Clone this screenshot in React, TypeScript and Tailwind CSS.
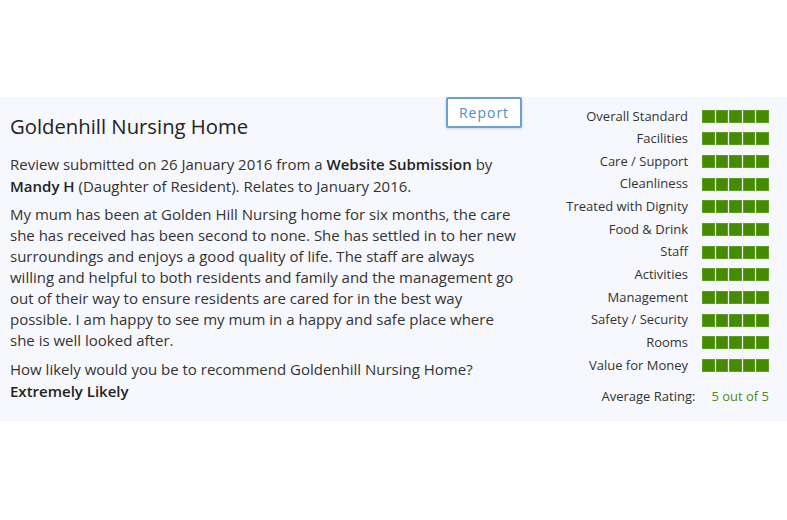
const ratings = [
  "Overall Standard",
  "Facilities",
  "Care / Support",
  "Cleanliness",
  "Treated with Dignity",
  "Food & Drink",
  "Staff",
  "Activities",
  "Management",
  "Safety / Security",
  "Rooms",
  "Value for Money",
];

const RatingBar = () => (
  <div className="flex gap-[1px]">
    {[0, 1, 2, 3, 4].map((i) => (
      <div key={i} className="w-[12.6px] h-[13px] bg-[#458b00] border border-[#5c9e24]" />
    ))}
  </div>
);

export default function App() {
  return (
    <div className="w-[787px] h-[520px] bg-white pt-[97px] font-['Open_Sans',sans-serif]">
      <div className="flex h-[324px] bg-[#f7f8fd]">
        <div className="w-[525px] pl-[10px] pr-[3px]">
          <div className="flex justify-between items-start">
            <h2 className="mt-[15px] text-[20.3px] leading-[28px] text-[#222]">Goldenhill Nursing Home</h2>
            <button className="w-[76px] h-[31px] bg-white border-2 border-[#6aa2d8] rounded-[2px] shadow-[0_1px_3px_rgba(0,0,0,0.15)] text-[14px] tracking-[1px] text-[#4f8cc9]">
              Report
            </button>
          </div>
          <div className="mt-[14px] text-[15px] leading-[21.5px] text-[#333]">
            <p className="mb-[7px]">
              Review submitted on 26 January 2016 from a <b className="font-semibold text-[#222]">Website Submission</b> by{" "}
              <b className="font-semibold text-[#222]">Mandy H</b> (Daughter of Resident). Relates to January 2016.
            </p>
            <p className="mb-[8px] leading-[21px]">
              My mum has been at Golden Hill Nursing home for six months, the care she has received has been second to
              none. She has settled in to her new surroundings and enjoys a good quality of life. The staff are always
              willing and helpful to both residents and family and the management go out of their way to ensure
              residents are cared for in the best way possible. I am happy to see my mum in a happy and safe place where
              she is well looked after.
            </p>
            <p>
              How likely would you be to recommend Goldenhill Nursing Home?
              <br />
              <b className="font-semibold text-[#222]">Extremely Likely</b>
            </p>
          </div>
        </div>
        <div className="flex-1 pt-[8px] pr-[18px] text-[13px] text-[#333]">
          {ratings.map((r) => (
            <div key={r} className="flex items-center justify-end h-[22.65px]">
              <span className="mr-[14px]">{r}</span>
              <RatingBar />
            </div>
          ))}
          <div className="flex justify-end items-center mt-[10px]">
            <span className="mr-[16px]">Average Rating:</span>
            <span className="text-[#4d8a1a]">5 out of 5</span>
          </div>
        </div>
      </div>
    </div>
  );
}
